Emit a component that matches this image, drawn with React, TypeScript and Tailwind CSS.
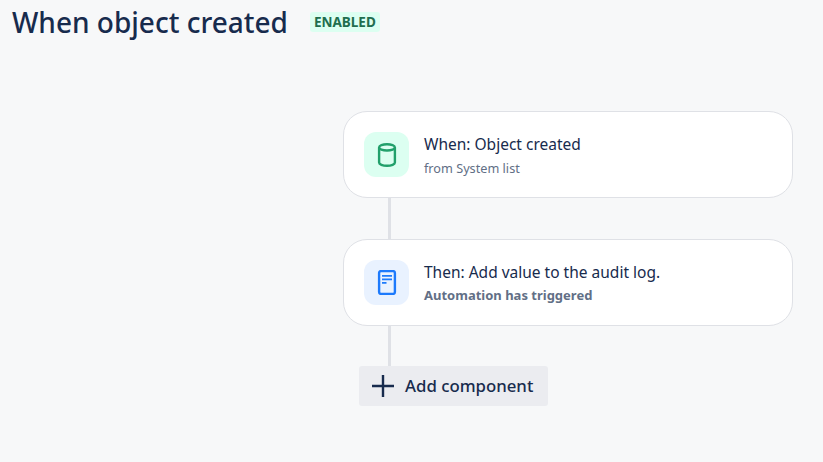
const font = "font-['Noto_Sans','Open_Sans',sans-serif]";

const DbIcon = () => (
  <svg width="24" height="24" viewBox="0 0 24 24" fill="none" stroke="#22A06B" strokeWidth="2.4">
    <ellipse cx="12" cy="4.4" rx="7.9" ry="3.1" />
    <path d="M4.1 4.4v15.2c0 1.8 3.5 3.2 7.9 3.2s7.9-1.4 7.9-3.2V4.4" />
  </svg>
);

const LogIcon = () => (
  <svg width="24" height="25" viewBox="0 0 24 25" fill="none">
    <rect x="4.1" y="1.1" width="15.8" height="22.8" rx="1.8" stroke="#1D7AFC" strokeWidth="2.4" />
    <path d="M7 5h10v1.8H7zM7 8.5h10v1.8H7zM7 12h4.5v1.8H7z" fill="#1D7AFC" />
  </svg>
);

const Card = ({ icon, iconBg, title, sub, subBold }: { icon: React.ReactNode; iconBg: string; title: string; sub: string; subBold?: boolean }) => (
  <div className="flex h-[87px] w-[450px] items-center rounded-[24px] border border-[#DFE1E6] bg-white pl-5">
    <div className={`flex h-[45px] w-[45px] items-center justify-center rounded-xl ${iconBg}`}>{icon}</div>
    <div className="ml-[15px] flex h-[43px] flex-col pt-px">
      <span className="text-[15.5px] leading-[20px] text-[#172B4D]">{title}</span>
      <span className={`leading-[16px] text-[#626F86] ${subBold ? "mt-[5px] text-[13px] font-bold" : "mt-[6px] text-[12.7px]"}`}>{sub}</span>
    </div>
  </div>
);

export default function App() {
  return (
    <div className={`h-[462px] w-[823px] overflow-hidden bg-[#F7F8F9] ${font}`}>
      <div className="flex items-center pl-3 pt-[3px]">
        <h1 className="text-[28px] font-medium leading-[38px] text-[#172B4D]">When object created</h1>
        <span className="ml-[22px] rounded-[3px] bg-[#DCFFF1] px-1 text-[13.5px] font-bold leading-[20px] text-[#216E4E]">ENABLED</span>
      </div>
      <div className="ml-[343px] mt-[70px] flex flex-col">
        <Card icon={<DbIcon />} iconBg="bg-[#DCFFF1]" title="When: Object created" sub="from System list" />
        <div className="ml-[45px] h-[41px] w-[3px] bg-[#DFE1E6]" />
        <Card icon={<LogIcon />} iconBg="bg-[#E9F2FF]" title="Then: Add value to the audit log." sub="Automation has triggered" subBold />
        <div className="ml-[45px] h-[40px] w-[3px] bg-[#DFE1E6]" />
        <button className="ml-4 flex h-10 w-[189px] items-center rounded-[3px] bg-[#EBECF0] pl-3 text-[16.8px] font-medium text-[#172B4D]">
          <svg width="24" height="24" viewBox="0 0 24 24" fill="none" stroke="#172B4D" strokeWidth="2.4">
            <path d="M12 1v22M1 12h22" />
          </svg>
          <span className="ml-[10px]">Add component</span>
        </button>
      </div>
    </div>
  );
}
